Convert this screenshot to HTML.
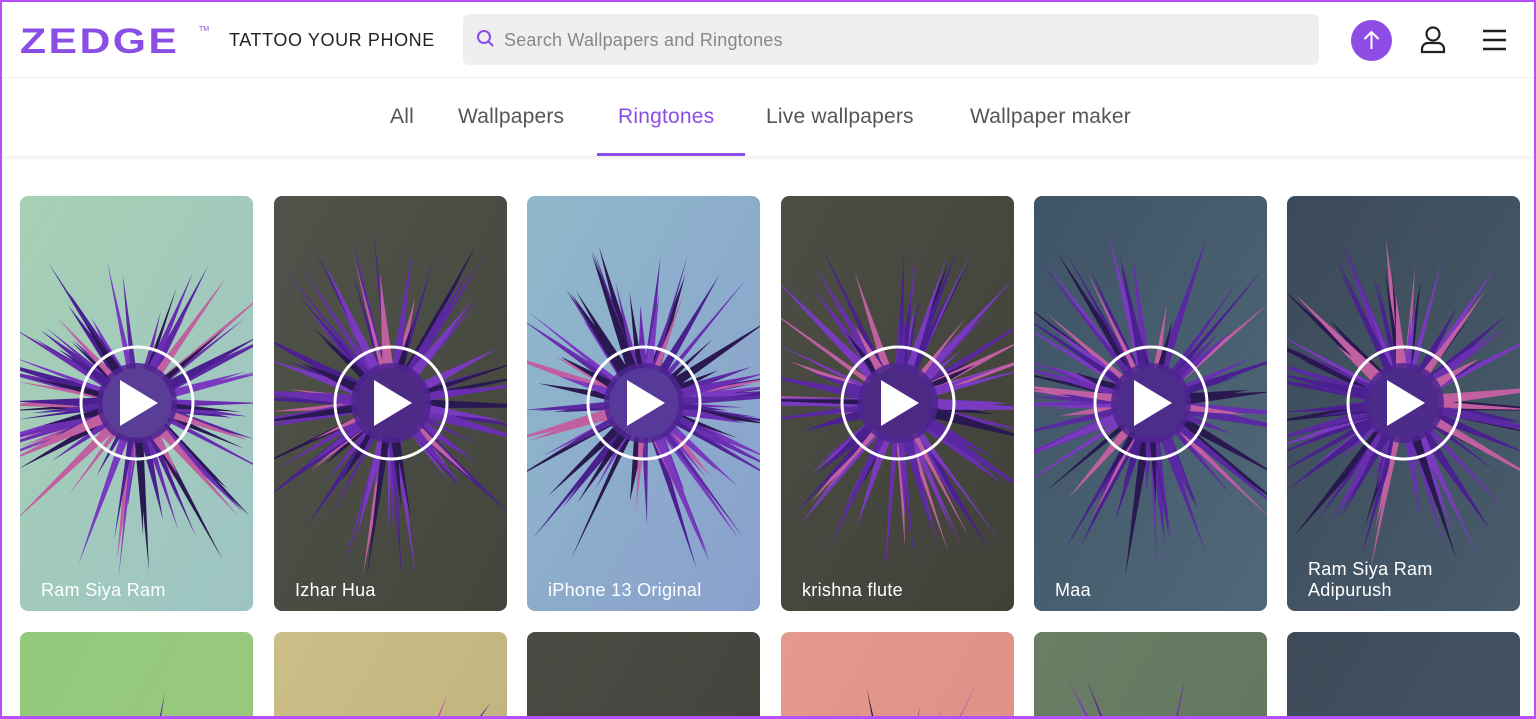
<!DOCTYPE html>
<html><head><meta charset="utf-8"><style>
*{box-sizing:border-box;margin:0;padding:0}
html,body{width:1536px;height:719px;overflow:hidden;background:#fff;font-family:"Liberation Sans",sans-serif}
#wrap{position:relative;width:1536px;height:719px;overflow:hidden}
.frame{position:absolute;left:0;top:0;width:1536px;height:719px;border:2px solid #b650ff;border-bottom-width:3px;pointer-events:none;z-index:10}
.hdr{position:absolute;left:0;top:0;width:1536px;height:78px;border-bottom:1px solid #eee}
.logo{position:absolute;left:20px;top:22px;font-size:35px;font-weight:bold;color:#8a4ee6;letter-spacing:2px;transform:scaleX(1.22);transform-origin:left}
.tm{position:absolute;left:199px;top:26px;font-size:7px;color:#8a4ee6}
.tag{position:absolute;left:229px;top:30px;font-size:18px;color:#222;letter-spacing:.6px}
.search{position:absolute;left:463px;top:14px;width:856px;height:51px;background:#efefef;border-radius:6px}
.search span{position:absolute;left:41px;top:16px;font-size:18px;color:#888;letter-spacing:.2px}
.nav{position:absolute;left:0;top:78px;width:1536px;height:78px;box-shadow:0 3px 4px rgba(0,0,0,.06)}
.nav a{position:absolute;top:27px;font-size:21px;color:#555;text-decoration:none;letter-spacing:.2px}
.ul{position:absolute;left:597px;top:153px;width:148px;height:3px;background:#8a4ee6}
.card{position:absolute;width:233px;height:415px;border-radius:8px;overflow:hidden}
.card svg{position:absolute;left:0;top:0}
.card .t{position:absolute;left:21px;bottom:10px;color:#fff;font-size:18px;line-height:21px;letter-spacing:.3px}
</style></head><body><div id="wrap">
<div class="frame"></div>
<div class="hdr">
<div class="logo">ZEDGE</div><div class="tm">TM</div>
<div class="tag">TATTOO YOUR PHONE</div>
<div class="search"><svg style="position:absolute;left:13px;top:15px" width="20" height="20" viewBox="0 0 20 20"><circle cx="8" cy="8" r="6" fill="none" stroke="#8a4ee6" stroke-width="2"/><line x1="12.5" y1="12.5" x2="17" y2="17" stroke="#8a4ee6" stroke-width="2"/></svg><span>Search Wallpapers and Ringtones</span></div>
<svg style="position:absolute;left:1351px;top:20px" width="41" height="41" viewBox="0 0 41 41"><circle cx="20.5" cy="20.5" r="20.5" fill="#8e4ee6"/><path d="M20.5 29V12M13.5 19l7-7 7 7" stroke="#fff" stroke-width="2" fill="none"/></svg>
<svg style="position:absolute;left:1420px;top:26px" width="26" height="28" viewBox="0 0 26 28"><circle cx="13" cy="8" r="6.5" fill="none" stroke="#222" stroke-width="2.2"/><path d="M2 26v-3a6 6 0 0 1 6-6h10a6 6 0 0 1 6 6v3z" fill="none" stroke="#222" stroke-width="2.2"/></svg>
<svg style="position:absolute;left:1482px;top:29px" width="25" height="22" viewBox="0 0 25 22"><path d="M1 2h23M1 11h23M1 20h23" stroke="#222" stroke-width="2.6"/></svg>
</div>
<div class="nav">
<a style="left:390px">All</a><a style="left:458px">Wallpapers</a><a style="left:618px;color:#8a4ee6">Ringtones</a><a style="left:766px">Live wallpapers</a><a style="left:970px">Wallpaper maker</a>
</div>
<div class="ul"></div>
<div id="cards"></div>
</div>
<script>
var xs=[20,274,527,781,1034,1287];
var r1=[["#a6d0b4","#9dc4c4"],["#50534a","#44463e"],["#8fb9cb","#8aa0cc"],["#4c4e45","#40423a"],["#3f5466","#4f6878"],["#3b4a58","#485c6c"]];
var r2=[["#94c97c","#98c880"],["#cabf86","#bfae7c"],["#4a4c44","#3e403a"],["#e49a8c","#dc8a86"],["#6a7e64","#60745e"],["#3e4a58","#46586a"]];
var names=["Ram Siya Ram","Izhar Hua","iPhone 13 Original","krishna flute","Maa","Ram Siya Ram<br>Adipurush"];
var cols=["#6a2fb0","#2a1850","#7a3ac0","#5a28a0","#4a2090","#c060a0"];
var seed=7;function rnd(){seed=(seed*9301+49297)%233280;return seed/233280;}
function burst(cx,cy,maxr,n){var s="";for(var i=0;i<n;i++){var a=rnd()*Math.PI*2,r=maxr*(0.45+rnd()*0.55),w=0.06+rnd()*0.1,b=35;var x1=cx+Math.cos(a-w)*b,y1=cy+Math.sin(a-w)*b,x2=cx+Math.cos(a+w)*b,y2=cy+Math.sin(a+w)*b,x3=cx+Math.cos(a)*r,y3=cy+Math.sin(a)*r;s+='<polygon points="'+x1+','+y1+' '+x3+','+y3+' '+x2+','+y2+'" fill="'+cols[Math.floor(rnd()*cols.length)]+'"/>';}return s+'<circle cx="'+cx+'" cy="'+cy+'" r="40" fill="#4e2590" opacity="0.85"/>';}
var h="";
for(var i=0;i<6;i++){
var g=r1[i];h+='<div class="card" style="left:'+xs[i]+'px;top:196px"><svg width="233" height="415"><defs><linearGradient id="g'+i+'" x1="0" y1="0" x2="1" y2="1"><stop offset="0" stop-color="'+g[0]+'"/><stop offset="1" stop-color="'+g[1]+'"/></linearGradient></defs><rect width="233" height="415" fill="url(#g'+i+')"/>'+burst(117,207,180,90)+'<circle cx="117" cy="207" r="56" fill="none" stroke="#fff" stroke-width="3"/><polygon points="100,184 100,230 138,207" fill="#fff"/></svg><div class="t">'+names[i]+'</div></div>';
g=r2[i];h+='<div class="card" style="left:'+xs[i]+'px;top:632px;height:85px;border-radius:8px 8px 0 0"><svg width="233" height="415"><defs><linearGradient id="h'+i+'" x1="0" y1="0" x2="1" y2="1"><stop offset="0" stop-color="'+g[0]+'"/><stop offset="1" stop-color="'+g[1]+'"/></linearGradient></defs><rect width="233" height="415" fill="url(#h'+i+')"/>'+burst(117,207,180,(i==1||i==3)?40:20)+'</svg></div>';
}
document.getElementById("cards").innerHTML=h;
</script>
</body></html>
